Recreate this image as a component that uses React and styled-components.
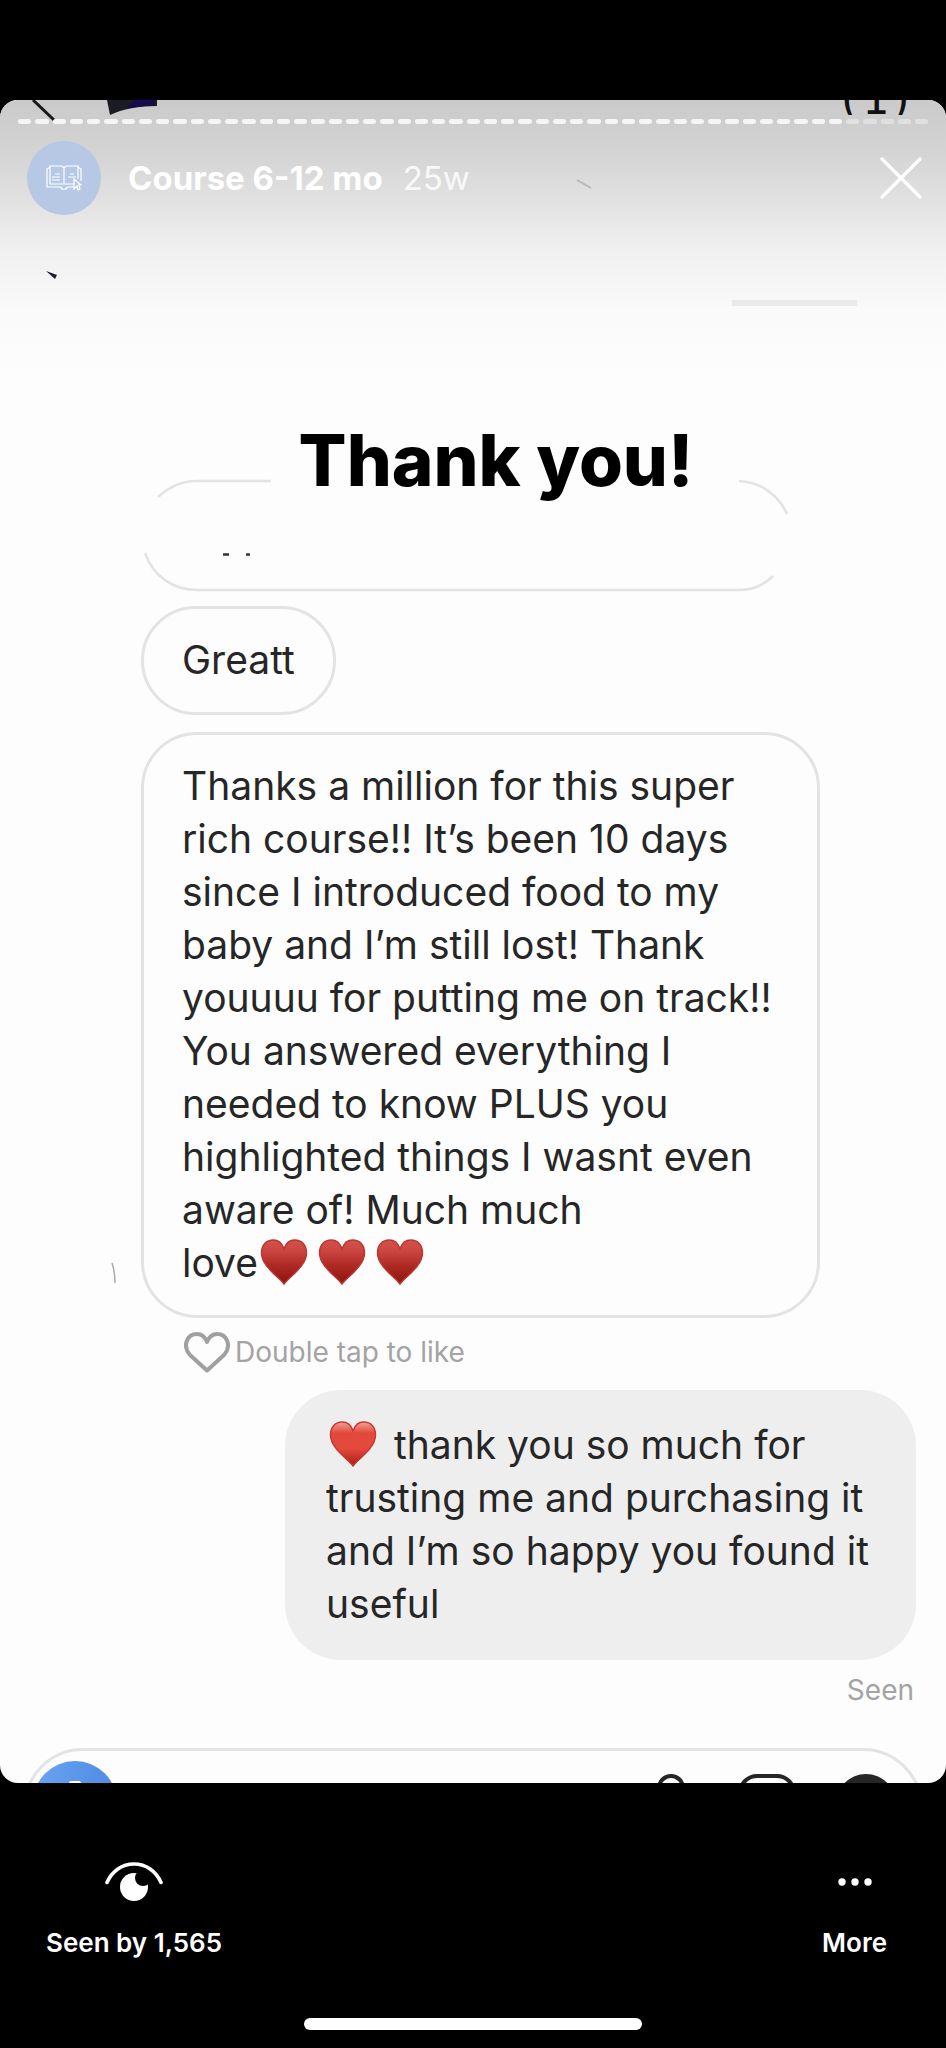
import React from 'react';
import styled, { createGlobalStyle } from 'styled-components';

const GlobalStyle = createGlobalStyle`
  * {
    box-sizing: border-box;
  }
  body {
    margin: 0;
    background: #000;
    font-family: Inter, "Liberation Sans", sans-serif;
  }
  button {
    padding: 0;
    border: none;
    background: none;
    color: inherit;
    font: inherit;
    cursor: pointer;
  }
  svg {
    display: block;
  }
`;

const StoryPage = styled.div`
  display: flex;
  flex-direction: column;
  min-height: 100vh;
  padding-top: 100px;
`;

const StoryCard = styled.main`
  position: relative;
  flex: 1;
  display: flex;
  flex-direction: column;
  overflow: hidden;
  border-radius: 18px;
  background: #fdfdfd;
`;

const TopShade = styled.div`
  position: absolute;
  top: 0;
  left: 0;
  right: 0;
  height: 290px;
  background: linear-gradient(
    #cacaca 0,
    #d3d3d3 50px,
    #e1e1e1 100px,
    #f0f0f0 150px,
    #fafafa 210px,
    #fdfdfd 290px
  );
`;

const Doodles = styled.svg`
  position: absolute;
  top: 0;
  left: 0;
`;

const FadedLine = styled.div`
  position: absolute;
  top: 200px;
  right: 89px;
  width: 125px;
  height: 6px;
  background: #e9e9e9;
`;

const CountLabel = styled.div`
  position: absolute;
  top: 0;
  right: 31px;
  height: 15px;
  overflow: hidden;
  display: flex;
  align-items: flex-end;
  color: #111;
  font-family: "DejaVu Sans Mono", monospace;
  font-size: 44px;
  line-height: 32px;
`;

const ProgressRow = styled.div`
  position: relative;
  display: flex;
  gap: 4px;
  padding: 19px 18px 0;
`;

const Segment = styled.div`
  flex: 1;
  height: 5px;
  border-radius: 3px;
  background: ${({ $seen }) => ($seen ? '#f5f5f5' : '#e0e0e0')};
`;

const StoryHeader = styled.header`
  position: relative;
  display: flex;
  align-items: center;
  padding: 17px 24px 0 27px;
`;

const Avatar = styled.div`
  display: flex;
  align-items: center;
  justify-content: center;
  width: 74px;
  height: 74px;
  margin-right: 27px;
  border-radius: 50%;
  background: #b7c8e5;
`;

const StoryTitle = styled.h1`
  margin: 0 20px 0 0;
  color: #fff;
  font-size: 33px;
  font-weight: 700;
  line-height: 40px;
`;

const StoryAge = styled.span`
  flex: 1;
  color: #f8f8f8;
  font-size: 33px;
  line-height: 40px;
`;

const Sticker = styled.h2`
  position: absolute;
  top: 312px;
  left: 0;
  right: 0;
  margin: 0;
  padding-left: 46px;
  color: #000;
  font-size: 71px;
  font-weight: 800;
  line-height: 96px;
  text-align: center;
`;

const Chat = styled.section`
  position: relative;
  display: flex;
  flex-direction: column;
  align-items: flex-start;
  padding: 264px 30px 0 141px;
`;

const Bubble = styled.div`
  width: ${({ $wide }) => ($wide ? '100%' : 'auto')};
  max-width: 679px;
  margin-top: ${({ $gap }) => $gap}px;
  padding: 24px 38px 26px;
  border: 3px solid #e3e3e3;
  border-radius: 56px;
  color: #262626;
  font-size: 39px;
  line-height: 53px;
  white-space: pre-line;
`;

const ReplyBubble = styled(Bubble)`
  align-self: flex-end;
  max-width: 631px;
  padding: 28px 41px 30px;
  border: none;
  background: #eee;
`;

const Hearts = styled.span`
  display: inline-flex;
  gap: 10px;
  height: 46px;
  margin: ${({ $reply }) => ($reply ? '0 6px 0 3px' : '0 0 0 2px')};
  vertical-align: -8px;
`;

const LikeHint = styled.button`
  display: flex;
  align-items: center;
  gap: 5px;
  height: 72px;
  padding: 0 0 4px 43px;
  color: #a3a3a3;
  font-size: 28px;
  line-height: 36px;
`;

const SeenNote = styled.p`
  align-self: flex-end;
  margin: 0;
  padding: 12px 2px 0 0;
  color: #a3a3a3;
  font-size: 28px;
  line-height: 36px;
`;

const ComposerPeek = styled.div`
  height: 35px;
  margin: auto 23px 0;
  overflow: hidden;
`;

const Composer = styled.div`
  display: flex;
  align-items: flex-start;
  height: 120px;
  padding: 10px 24px 0 7px;
  border: 3px solid #e3e3e3;
  border-radius: 60px;
`;

const CameraButton = styled.button`
  display: flex;
  justify-content: center;
  width: 84px;
  height: 84px;
  margin-right: auto;
  padding-top: 20px;
  border-radius: 50%;
  background: linear-gradient(90deg, #69a5ef, #4f8ae6);
`;

const ComposerButton = styled.button`
  margin: 13px 0 0 ${({ $gap }) => $gap}px;
`;

const StoryFooter = styled.footer`
  display: flex;
  flex-direction: column;
  align-items: center;
  height: 265px;
  padding-bottom: 18px;
`;

const FooterActions = styled.div`
  display: flex;
  justify-content: space-between;
  width: 100%;
  padding: 79px 59px 0 46px;
`;

const FooterButton = styled.button`
  display: flex;
  flex-direction: column;
  align-items: center;
  gap: 25px;
  color: #fff;
  font-size: 26px;
  font-weight: 600;
  line-height: 32px;
`;

const HomeBar = styled.div`
  width: 338px;
  height: 12px;
  margin-top: auto;
  border-radius: 6px;
  background: #fff;
`;

const HEART = 'M24 46C19 39 1 28 1 14C1 6 6 1 13 1C18 1 22 4 24 10C26 4 30 1 35 1C42 1 47 6 47 14C47 28 29 39 24 46Z';

const RedHeart = ({ bright }) => (
  <svg width="48" height="46" viewBox="0 0 48 47">
    <defs>
      <linearGradient id={bright ? 'heartBright' : 'heartDark'} x1="0" y1="0" x2="0" y2="1">
        <stop offset="0" stopColor={bright ? '#f3a299' : '#d4524b'} />
        <stop offset="0.25" stopColor={bright ? '#e2493c' : '#cb4640'} />
        <stop offset="0.6" stopColor={bright ? '#e4493c' : '#ae2822'} />
        <stop offset="1" stopColor={bright ? '#a91d19' : '#8c1410'} />
      </linearGradient>
    </defs>
    <path
      d={HEART}
      fill={`url(#${bright ? 'heartBright' : 'heartDark'})`}
      stroke={bright ? '#c33a32' : '#b93630'}
      strokeWidth="1.5"
    />
  </svg>
);

const BookIcon = () => (
  <svg width="36" height="26" viewBox="0 0 36 26" fill="none" stroke="#fff" strokeWidth="1.2">
    <path d="M18 19V3L16 1H4V19H32M18 3L20 1H32V14" />
    <path d="M4 2L1 4V22H15C15 25 21 25 21 22H28M32 2L35 4V16" />
    <path d="M9 9H14M6 12H14M6 15H14M24 9H28M22 12H30" />
    <path d="M28 14V24L31 21L32 25L34 24L33 20H35Z" fill="#b7c8e5" />
  </svg>
);

const CloseIcon = () => (
  <svg width="42" height="42" viewBox="0 0 42 42" stroke="#fff" strokeWidth="3.2" strokeLinecap="round">
    <path d="M2 2L40 40M40 2L2 40" />
  </svg>
);

const EyeIcon = () => (
  <svg width="58" height="40" viewBox="0 0 58 40">
    <path d="M2 20.500C7 9 17 2 29 2S51 9 56 20.500" fill="none" stroke="#fff" strokeWidth="3.6" strokeLinecap="round" />
    <circle cx="29" cy="25" r="14" fill="#fff" />
    <circle cx="38" cy="16" r="8" fill="#000" />
  </svg>
);

const DotsIcon = () => (
  <svg width="34" height="40" viewBox="0 0 34 40" fill="#fff">
    <circle cx="4" cy="20" r="3.7" />
    <circle cx="17" cy="20" r="3.7" />
    <circle cx="30" cy="20" r="3.7" />
  </svg>
);

// bubble whose outline is partly rubbed out
const ErasedBubble = () => (
  <svg width="655" height="113" viewBox="0 0 655 113" fill="none" stroke="#e3e3e3" strokeWidth="2.5">
    <path d="M17 18C29 7 42 2 56 2H130M598 2C619 3 637 15 646 35M4 74C12 97 32 111 56 111H598C611 111 623 106 632 97" />
    <path d="M82 75.500H88M105 75.500H109" stroke="#333" />
  </svg>
);

const SEGMENTS = Array.from({ length: 53 }, (_, i) => i);

const App = () => {
  return (
    <>
      <GlobalStyle />
      <StoryPage>
        <StoryCard>
          <TopShade />
          <Doodles width="620" height="1200" viewBox="0 0 620 1200" fill="none">
            <path d="M33 0L54 20" stroke="#171717" strokeWidth="3" />
            <path d="M107 0H157V6C140 6 122 9 110 15Z" fill="#1b1b22" />
            <path d="M134 0H155V5L126 8Z" fill="#160b4d" />
            <path d="M46 171L57 175L55 179Z" fill="#1c1a33" />
            <path d="M577 80L591 88" stroke="#b8b8b8" strokeWidth="2" />
            <path d="M112 1163C114 1169 115 1176 115 1183" stroke="#aaa" strokeWidth="1.500" />
          </Doodles>
          <FadedLine />
          <CountLabel>(1)</CountLabel>

          <ProgressRow>
            {SEGMENTS.map((i) => (
              <Segment key={i} $seen={i < 48} />
            ))}
          </ProgressRow>
          <StoryHeader>
            <Avatar>
              <BookIcon />
            </Avatar>
            <StoryTitle>Course 6-12 mo</StoryTitle>
            <StoryAge>25w</StoryAge>
            <button type="button" aria-label="Close">
              <CloseIcon />
            </button>
          </StoryHeader>

          <Chat>
            <ErasedBubble />
            <Bubble $gap={14}>Greatt</Bubble>
            <Bubble $gap={17} $wide>
              {'Thanks a million for this super\nrich course!! It’s been 10 days\nsince I introduced food to my\nbaby and I’m still lost! Thank\nyouuuu for putting me on track!!\nYou answered everything I\nneeded to know PLUS you\nhighlighted things I wasnt even\naware of! Much much\nlove'}
              <Hearts>
                <RedHeart />
                <RedHeart />
                <RedHeart />
              </Hearts>
            </Bubble>
            <LikeHint type="button">
              <svg width="46" height="41" viewBox="0 0 46 41" fill="none" stroke="#a0a0a0" strokeWidth="4">
                <path d="M23 38.500L6 23C-2 14 3 2 13 2C18 2 21 5 23 10C25 5 28 2 33 2C43 2 48 14 40 23Z" strokeLinejoin="round" />
              </svg>
              Double tap to like
            </LikeHint>
            <ReplyBubble $gap={0} $wide>
              <Hearts $reply>
                <RedHeart bright />
              </Hearts>
              {' thank you so much for\ntrusting me and purchasing it\nand I’m so happy you found it\nuseful'}
            </ReplyBubble>
            <SeenNote>Seen</SeenNote>
          </Chat>
          <Sticker>Thank you!</Sticker>

          <ComposerPeek>
            <Composer>
              <CameraButton type="button" aria-label="Camera">
                <svg width="12" height="12" viewBox="0 0 12 12">
                  <rect width="12" height="12" rx="2" fill="#fff" />
                </svg>
              </CameraButton>
              <ComposerButton type="button" aria-label="Voice message" $gap={0}>
                <svg width="28" height="50" viewBox="0 0 28 50" fill="none" stroke="#262626" strokeWidth="4">
                  <rect x="2" y="2" width="24" height="40" rx="12" />
                </svg>
              </ComposerButton>
              <ComposerButton type="button" aria-label="Photo" $gap={53}>
                <svg width="58" height="56" viewBox="0 0 58 56" fill="none" stroke="#262626" strokeWidth="4">
                  <rect x="2" y="2" width="54" height="52" rx="17" />
                </svg>
              </ComposerButton>
              <ComposerButton type="button" aria-label="Add" $gap={40}>
                <svg width="60" height="60" viewBox="0 0 60 60">
                  <circle cx="30" cy="30" r="30" fill="#262626" />
                </svg>
              </ComposerButton>
            </Composer>
          </ComposerPeek>
        </StoryCard>

        <StoryFooter>
          <FooterActions>
            <FooterButton type="button">
              <EyeIcon />
              Seen by 1,565
            </FooterButton>
            <FooterButton type="button">
              <DotsIcon />
              More
            </FooterButton>
          </FooterActions>
          <HomeBar />
        </StoryFooter>
      </StoryPage>
    </>
  );
};

export default App;
